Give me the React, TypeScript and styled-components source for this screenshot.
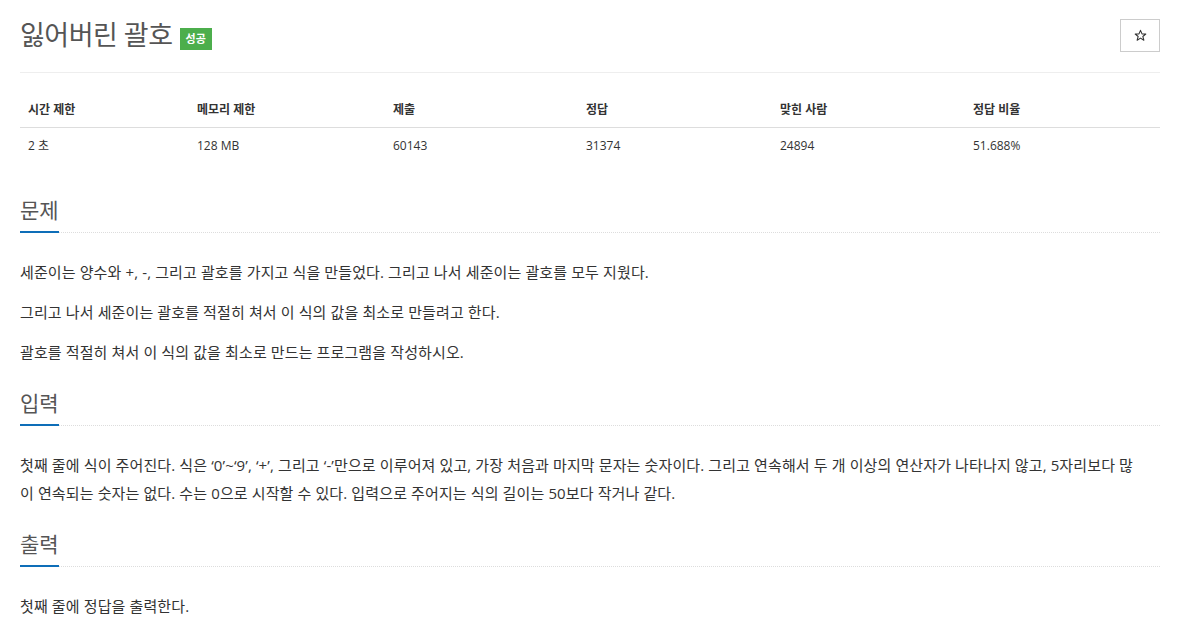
import * as React from 'react';
import styled, { createGlobalStyle } from 'styled-components';

const GlobalStyle = createGlobalStyle`
  body {
    margin: 0;
    background: #fff;
    font-family: 'Open Sans', 'Noto Sans CJK KR', sans-serif;
    color: #333;
  }
`

const Page = styled.div`
  padding: 0 21px 0 20px;
`

const PageHeader = styled.div`
  display: flex;
  align-items: center;
  justify-content: space-between;
  padding-top: 18px;
  padding-bottom: 20px;
  border-bottom: 1px solid #eee;
`

const TitleRow = styled.div`
  display: flex;
  align-items: center;
  gap: 7px;
`

const Title = styled.h1`
  margin: 0;
  font-size: 27px;
  line-height: 34px;
  font-weight: 400;
  color: #555;
  letter-spacing: -0.5px;
`

const Badge = styled.span<{ $color: string }>`
  display: inline-block;
  margin-top: 7px;
  padding: 3px 6px;
  background: ${p => p.$color};
  color: #fff;
  font-size: 11px;
  font-weight: 700;
  line-height: 16px;
`

const StarButton = styled.button`
  width: 40px;
  height: 33px;
  border: 1px solid #ccc;
  background: #fff;
  color: #333;
  display: flex;
  align-items: center;
  justify-content: center;
  padding: 0;
`

// margins collapse with the first section's top margin
const InfoTable = styled.table`
  width: 100%;
  margin-top: 20px;
  margin-bottom: 32px;
  border-collapse: collapse;
  font-size: 12px;

  th, td {
    text-align: left;
    padding: 8px;
    line-height: 18px;
  }

  td {
    padding-top: 9px;
  }

  th {
    font-weight: 700;
    border-bottom: 1px solid #ddd;
  }
`

const Section = styled.section`
  margin-top: 22px;
`

const Headline = styled.div`
  display: flex;
  border-bottom: 1px dotted #ddd;
  margin-bottom: 25px;
`

const HeadlineText = styled.h2`
  margin: 0;
  padding-bottom: 6px;
  font-size: 21px;
  line-height: 30px;
  font-weight: 400;
  color: #555;
  border-bottom: 2px solid #0e6eb8;
  margin-bottom: -1px;
`

const Text = styled.p`
  margin: 0 0 12px;
  padding-right: 14px;
  font-size: 15px;
  line-height: 28px;
  letter-spacing: 0.12px;
  color: #333;
`

const cols = [
  { head: '시간 제한', value: '2 초', w: 169 },
  { head: '메모리 제한', value: '128 MB', w: 196 },
  { head: '제출', value: '60143', w: 193 },
  { head: '정답', value: '31374', w: 194 },
  { head: '맞힌 사람', value: '24894', w: 193 },
  { head: '정답 비율', value: '51.688%' },
]

const StarIcon = () => (
  <svg width="13" height="13" viewBox="0 0 24 24" fill="none" stroke="#333" strokeWidth="2" strokeLinejoin="round">
    <polygon points="12,2.5 14.8,9 21.8,9.3 16.3,13.8 18.2,20.7 12,16.8 5.8,20.7 7.7,13.8 2.2,9.3 9.2,9" />
  </svg>
)

export default function App() {
  return (
    <>
      <GlobalStyle />
      <Page>
        <PageHeader>
          <TitleRow>
            <Title>잃어버린 괄호</Title>
            <Badge $color="#4cae4c">성공</Badge>
          </TitleRow>
          <StarButton aria-label="즐겨찾기"><StarIcon /></StarButton>
        </PageHeader>

        <InfoTable>
          <thead>
            <tr>
              {cols.map(c => <th key={c.head} style={c.w ? { width: c.w - 16 } : undefined}>{c.head}</th>)}
            </tr>
          </thead>
          <tbody>
            <tr>
              {cols.map(c => <td key={c.head}>{c.value}</td>)}
            </tr>
          </tbody>
        </InfoTable>

        <Section>
          <Headline><HeadlineText>문제</HeadlineText></Headline>
          <Text>세준이는 양수와 +, -, 그리고 괄호를 가지고 식을 만들었다. 그리고 나서 세준이는 괄호를 모두 지웠다.</Text>
          <Text>그리고 나서 세준이는 괄호를 적절히 쳐서 이 식의 값을 최소로 만들려고 한다.</Text>
          <Text>괄호를 적절히 쳐서 이 식의 값을 최소로 만드는 프로그램을 작성하시오.</Text>
        </Section>

        <Section>
          <Headline><HeadlineText>입력</HeadlineText></Headline>
          <Text>첫째 줄에 식이 주어진다. 식은 ‘0’~‘9’, ‘+’, 그리고 ‘-’만으로 이루어져 있고, 가장 처음과 마지막 문자는 숫자이다. 그리고 연속해서 두 개 이상의 연산자가 나타나지 않고, 5자리보다 많이 연속되는 숫자는 없다. 수는 0으로 시작할 수 있다. 입력으로 주어지는 식의 길이는 50보다 작거나 같다.</Text>
        </Section>

        <Section>
          <Headline><HeadlineText>출력</HeadlineText></Headline>
          <Text>첫째 줄에 정답을 출력한다.</Text>
        </Section>
      </Page>
    </>
  )
}
